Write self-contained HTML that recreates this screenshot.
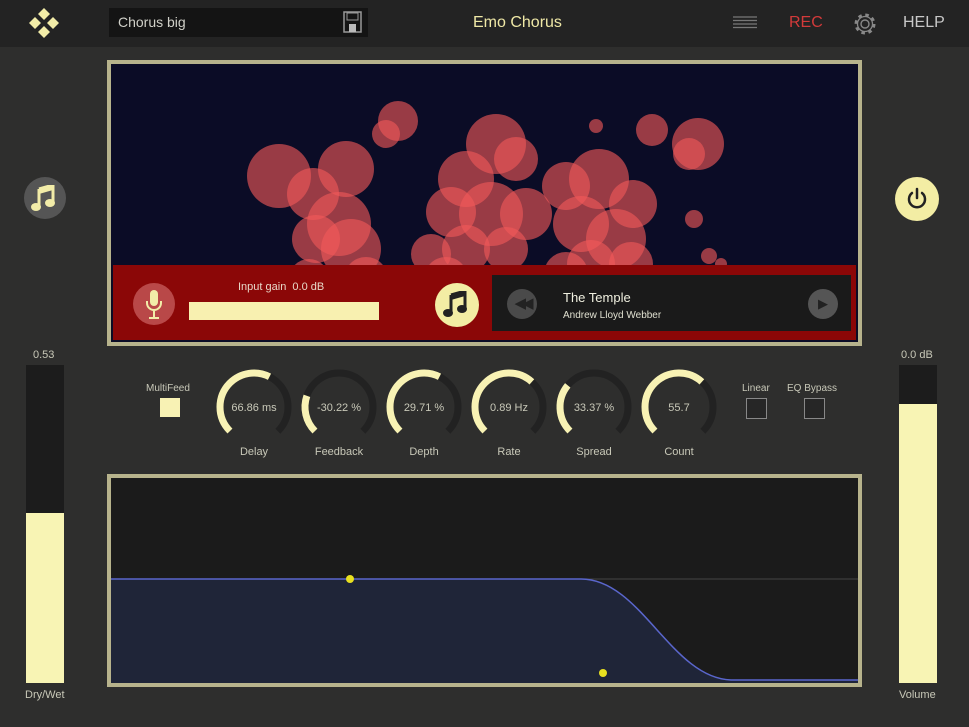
<!DOCTYPE html>
<html><head><meta charset="utf-8"><style>
body{margin:0;width:969px;height:727px;overflow:hidden;background:#2e2e2d;font-family:"Liberation Sans",sans-serif;position:relative}
.a{position:absolute}
.t{color:#c8c8b8;font-size:11px}
</style></head><body>
<div class="a" style="left:0;top:0;width:969px;height:47px;background:#232323"></div>
<svg class="a" style="left:22px;top:6px" width="44" height="34"><g fill="#f2eca8"><path d="M22 2L28 8L22 14L16 8Z"/><path d="M13 11L19 17L13 23L7 17Z"/><path d="M31 11L37 17L31 23L25 17Z"/><path d="M22 20L28 26L22 32L16 26Z"/></g></svg>
<div class="a" style="left:109px;top:8px;width:259px;height:29px;background:#141414"></div>
<div class="a" style="left:118px;top:14px;color:#d0d0c8;font-size:14px">Chorus big</div>
<svg class="a" style="left:342px;top:11px" width="22" height="22"><rect x="2" y="1" width="17" height="20" fill="none" stroke="#999" stroke-width="1.5"/><rect x="5" y="2" width="11" height="7" fill="none" stroke="#999"/><rect x="7" y="13" width="7" height="8" fill="#bbb"/></svg>
<div class="a" style="left:473px;top:14px;color:#efe8a6;font-size:16px">Emo Chorus</div>
<svg class="a" style="left:733px;top:15px" width="24" height="16"><g stroke="#777" stroke-width="1.3"><path d="M0 2H24M0 5.5H24M0 9H24M0 12.5H24"/></g></svg>
<div class="a" style="left:789px;top:14px;color:#d23a3a;font-size:16px">REC</div>
<svg class="a" style="left:852px;top:11px" width="26" height="26" viewBox="0 0 26 26"><circle cx="13" cy="13" r="4" fill="none" stroke="#888" stroke-width="1.4"/><circle cx="13" cy="13" r="9" fill="none" stroke="#888" stroke-width="3" stroke-dasharray="3.5 3.57"/><circle cx="13" cy="13" r="7.5" fill="none" stroke="#888" stroke-width="1.3"/></svg>
<div class="a" style="left:903px;top:14px;color:#c8c8c8;font-size:16px">HELP</div>

<svg width="0" height="0" style="position:absolute"><defs><g id="note"><path d="M8 4L22 0V18" stroke="currentColor" stroke-width="3" fill="none"/><path d="M8 4V22" stroke="currentColor" stroke-width="3"/><path d="M8 4L22 0V5L8 9Z" fill="currentColor"/><ellipse cx="5" cy="22" rx="5" ry="4" fill="currentColor"/><ellipse cx="19" cy="18" rx="5" ry="4" fill="currentColor"/></g></defs></svg>

<div class="a" style="left:107px;top:60px;width:747px;height:278px;border:4px solid #b7b38c;background:#0b0c26;overflow:hidden">
<svg width="747" height="278" style="position:absolute;left:0;top:0">
<g fill="#f05858" fill-opacity="0.62">
<circle cx="287" cy="57" r="20"/><circle cx="275" cy="70" r="14"/><circle cx="168" cy="112" r="32"/><circle cx="235" cy="105" r="28"/><circle cx="202" cy="130" r="26"/><circle cx="228" cy="160" r="32"/><circle cx="240" cy="185" r="30"/><circle cx="205" cy="175" r="24"/><circle cx="198" cy="215" r="20"/><circle cx="255" cy="215" r="22"/>
<circle cx="385" cy="80" r="30"/><circle cx="405" cy="95" r="22"/><circle cx="355" cy="115" r="28"/><circle cx="340" cy="148" r="25"/><circle cx="380" cy="150" r="32"/><circle cx="415" cy="150" r="26"/><circle cx="355" cy="185" r="24"/><circle cx="395" cy="185" r="22"/><circle cx="320" cy="190" r="20"/><circle cx="335" cy="215" r="22"/><circle cx="375" cy="225" r="20"/><circle cx="310" cy="230" r="18"/>
<circle cx="455" cy="122" r="24"/><circle cx="488" cy="115" r="30"/><circle cx="522" cy="140" r="24"/><circle cx="470" cy="160" r="28"/><circle cx="505" cy="175" r="30"/><circle cx="480" cy="200" r="24"/><circle cx="520" cy="200" r="22"/><circle cx="455" cy="210" r="22"/><circle cx="500" cy="225" r="20"/>
<circle cx="541" cy="66" r="16"/><circle cx="587" cy="80" r="26"/><circle cx="578" cy="90" r="16"/><circle cx="485" cy="62" r="7"/><circle cx="583" cy="155" r="9"/><circle cx="598" cy="192" r="8"/><circle cx="610" cy="200" r="6"/><circle cx="185" cy="218" r="8"/><circle cx="175" cy="210" r="6"/>
</g></svg>
<div class="a" style="left:2px;top:201px;width:743px;height:75px;background:#8b0707"></div>
<div class="a" style="left:22px;top:219px;width:42px;height:42px;border-radius:50%;background:#b94848"></div>
<svg class="a" style="left:33px;top:225px" width="20" height="32"><rect x="6" y="1" width="8" height="16" rx="4" fill="#f2eca8"/><path d="M3 12v2a7 7 0 0 0 14 0v-2M10 21v8M5 29h10" stroke="#f2eca8" stroke-width="2" fill="none"/></svg>
<div class="a" style="left:78px;top:238px;width:190px;height:18px;background:#f8f0b0"></div>
<div class="a t" style="left:127px;top:217px;color:#e8d8c8">Input gain&nbsp; 0.0 dB</div>
<div class="a" style="left:324px;top:219px;width:44px;height:44px;border-radius:50%;background:#f3eda4"></div>
<svg class="a" style="left:332px;top:227px;color:#222" width="28" height="28"><use href="#note"/></svg>
<div class="a" style="left:381px;top:211px;width:359px;height:56px;background:#1a1a1a"></div>
<div class="a" style="left:396px;top:225px;width:30px;height:30px;border-radius:50%;background:#4a4a4a;color:#222;font-size:15px;text-align:center;line-height:30px;letter-spacing:-4px">◀◀</div>
<div class="a" style="left:452px;top:226px;color:#f0f0e0;font-size:13px">The Temple</div>
<div class="a" style="left:452px;top:246px;color:#e0e0d0;font-size:10px">Andrew Lloyd Webber</div>
<div class="a" style="left:697px;top:225px;width:30px;height:30px;border-radius:50%;background:#555;color:#222;font-size:13px;text-align:center;line-height:30px">▶</div>
</div>

<div class="a" style="left:24px;top:177px;width:42px;height:42px;border-radius:50%;background:#555"></div>
<svg class="a" style="left:31px;top:185px;color:#f2eca8" width="28" height="28"><use href="#note"/></svg>
<div class="a" style="left:895px;top:177px;width:44px;height:44px;border-radius:50%;background:#f3eda4"></div>
<svg class="a" style="left:905px;top:187px" width="24" height="24"><path d="M7 6a8 8 0 1 0 10 0M12 2v9" stroke="#222" stroke-width="2.5" fill="none" stroke-linecap="round"/></svg>

<div class="a t" style="left:33px;top:349px">0.53</div>
<div class="a" style="left:26px;top:365px;width:38px;height:318px;background:#1c1c1c"></div>
<div class="a" style="left:26px;top:513px;width:38px;height:170px;background:#f8f4b4"></div>
<div class="a t" style="left:25px;top:689px">Dry/Wet</div>
<div class="a t" style="left:901px;top:349px">0.0 dB</div>
<div class="a" style="left:899px;top:365px;width:38px;height:318px;background:#1c1c1c"></div>
<div class="a" style="left:899px;top:404px;width:38px;height:279px;background:#f8f4b4"></div>
<div class="a t" style="left:899px;top:689px">Volume</div>

<div class="a t" style="left:146px;top:383px;font-size:10px">MultiFeed</div>
<div class="a" style="left:160px;top:398px;width:20px;height:19px;background:#f8f2b4"></div>
<div class="a t" style="left:742px;top:383px;font-size:10px">Linear</div>
<div class="a" style="left:746px;top:398px;width:19px;height:19px;border:1px solid #888;background:#262626"></div>
<div class="a t" style="left:787px;top:383px;font-size:10px">EQ Bypass</div>
<div class="a" style="left:804px;top:398px;width:19px;height:19px;border:1px solid #888;background:#262626"></div>

<svg class="a" style="left:0;top:360px" width="969" height="110">
<defs><g id="k"><circle r="34" fill="none" stroke="#222" stroke-width="7" stroke-dasharray="160.2 100" transform="rotate(135)"/></g></defs>
<g font-family="Liberation Sans" font-size="11" fill="#c8c8b8" text-anchor="middle">
<g transform="translate(254,47)"><use href="#k"/><circle r="34" fill="none" stroke="#f8f2b4" stroke-width="7" stroke-dasharray="96 200" transform="rotate(135)"/><text y="4">66.86 ms</text><text y="48">Delay</text></g>
<g transform="translate(339,47)"><use href="#k"/><circle r="34" fill="none" stroke="#f8f2b4" stroke-width="7" stroke-dasharray="38 200" transform="rotate(135)"/><text y="4">-30.22 %</text><text y="48">Feedback</text></g>
<g transform="translate(424,47)"><use href="#k"/><circle r="34" fill="none" stroke="#f8f2b4" stroke-width="7" stroke-dasharray="96 200" transform="rotate(135)"/><text y="4">29.71 %</text><text y="48">Depth</text></g>
<g transform="translate(509,47)"><use href="#k"/><circle r="34" fill="none" stroke="#f8f2b4" stroke-width="7" stroke-dasharray="105 200" transform="rotate(135)"/><text y="4">0.89  Hz</text><text y="48">Rate</text></g>
<g transform="translate(594,47)"><use href="#k"/><circle r="34" fill="none" stroke="#f8f2b4" stroke-width="7" stroke-dasharray="50 200" transform="rotate(135)"/><text y="4">33.37 %</text><text y="48">Spread</text></g>
<g transform="translate(679,47)"><use href="#k"/><circle r="34" fill="none" stroke="#f8f2b4" stroke-width="7" stroke-dasharray="105 200" transform="rotate(135)"/><text y="4">55.7</text><text y="48">Count</text></g>
</g></svg>

<div class="a" style="left:107px;top:474px;width:747px;height:205px;border:4px solid #b7b38c;background:#1b1b1b;overflow:hidden">
<svg width="747" height="205" style="position:absolute;left:0;top:0">
<path d="M0 101H747" stroke="#444" stroke-width="1"/>
<path d="M0 101H470C530 101 560 200 620 202H747V205H0Z" fill="#1f2538"/>
<path d="M0 101H470C530 101 560 200 620 202H747" stroke="#5a66cc" stroke-width="1.5" fill="none"/>
<circle cx="239" cy="101" r="4" fill="#e8e020"/><circle cx="492" cy="195" r="4" fill="#e8e020"/>
</svg></div>
</body></html>
